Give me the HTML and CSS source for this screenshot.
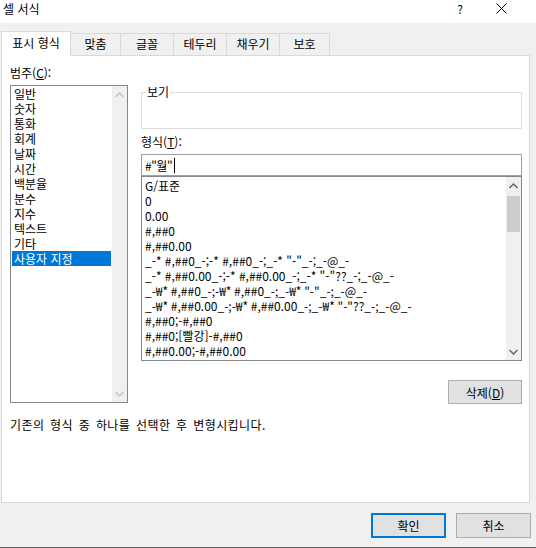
FILE: index.html
```html
<!DOCTYPE html>
<html lang="ko">
<head>
<meta charset="utf-8">
<title>셀 서식</title>
<link rel="stylesheet" href="styles.css">
</head>
<body>
<div class="window">
  <div class="titlebar">
    <span class="title">셀 서식</span>
    <span class="help">?</span>
    <span class="close"><svg width="11" height="11" viewBox="0 0 11 11"><path d="M0.5 0.5 L10.5 10.5 M10.5 0.5 L0.5 10.5" stroke="#000" stroke-width="1" fill="none"/></svg></span>
  </div>
  <div class="tabs">
    <div class="tab active w70">표시 형식</div>
    <div class="tab w50">맞춤</div>
    <div class="tab w53">글꼴</div>
    <div class="tab w53">테두리</div>
    <div class="tab w53">채우기</div>
    <div class="tab w50">보호</div>
  </div>
  <div class="panel">
    <div class="columns">
      <div class="left">
        <div class="label">범주(<u>C</u>):</div>
        <div class="listbox cat">
          <div class="items">
            <div class="item">일반</div>
            <div class="item">숫자</div>
            <div class="item">통화</div>
            <div class="item">회계</div>
            <div class="item">날짜</div>
            <div class="item">시간</div>
            <div class="item">백분율</div>
            <div class="item">분수</div>
            <div class="item">지수</div>
            <div class="item">텍스트</div>
            <div class="item">기타</div>
            <div class="item selected">사용자 지정</div>
          </div>
          <div class="scrollbar disabled">
            <div class="arrow"><svg width="9" height="6" viewBox="0 0 9 6"><path d="M0.5 5 L4.5 1 L8.5 5" stroke="#c2c2c2" stroke-width="1.3" fill="none"/></svg></div>
            <div class="track"></div>
            <div class="arrow"><svg width="9" height="6" viewBox="0 0 9 6"><path d="M0.5 1 L4.5 5 L8.5 1" stroke="#c2c2c2" stroke-width="1.3" fill="none"/></svg></div>
          </div>
        </div>
      </div>
      <div class="right">
        <div class="group">
          <span class="legend">보기</span>
        </div>
        <div class="label fmt-label">형식(<u>T</u>):</div>
        <div class="input"><span class="val">#"월"</span><span class="caret"></span></div>
        <div class="listbox fmt">
          <div class="items">
            <div class="item">G/표준</div>
            <div class="item">0</div>
            <div class="item">0.00</div>
            <div class="item">#,##0</div>
            <div class="item">#,##0.00</div>
            <div class="item">_-* #,##0_-;-* #,##0_-;_-* "-"_-;_-@_-</div>
            <div class="item">_-* #,##0.00_-;-* #,##0.00_-;_-* "-"??_-;_-@_-</div>
            <div class="item">_-₩* #,##0_-;-₩* #,##0_-;_-₩* "-"_-;_-@_-</div>
            <div class="item">_-₩* #,##0.00_-;-₩* #,##0.00_-;_-₩* "-"??_-;_-@_-</div>
            <div class="item">#,##0;-#,##0</div>
            <div class="item">#,##0;[빨강]-#,##0</div>
            <div class="item">#,##0.00;-#,##0.00</div>
          </div>
          <div class="scrollbar">
            <div class="arrow"><svg width="9" height="6" viewBox="0 0 9 6"><path d="M0.5 5 L4.5 1 L8.5 5" stroke="#606060" stroke-width="1.3" fill="none"/></svg></div>
            <div class="track"><div class="thumb"></div></div>
            <div class="arrow"><svg width="9" height="6" viewBox="0 0 9 6"><path d="M0.5 1 L4.5 5 L8.5 1" stroke="#606060" stroke-width="1.3" fill="none"/></svg></div>
          </div>
        </div>
        <div class="btnrow">
          <div class="button">삭제(<u>D</u>)</div>
        </div>
      </div>
    </div>
    <div class="desc">기존의 형식 중 하나를 선택한 후 변형시킵니다.</div>
  </div>
  <div class="footer">
    <div class="button default">확인</div>
    <div class="button">취소</div>
  </div>
  <div class="spacer"></div>
  <div class="bottomline"></div>
</div>
</body>
</html>
```
FILE: styles.css
```css
* { box-sizing: border-box; }
html, body {
  margin: 0;
  padding: 0;
}
body {
  width: 536px;
  height: 548px;
  overflow: hidden;
  background: #f0f0f0;
  font-family: "Noto Sans CJK KR", sans-serif;
  font-size: 12px;
  color: #000;
}
.window {
  display: flex;
  flex-direction: column;
  height: 548px;
}
.titlebar {
  height: 23px;
  background: #fff;
  display: flex;
  align-items: flex-start;
  line-height: 17px;
}
.title {
  padding-left: 3px;
  flex: 1;
}
.help {
  width: 12px;
  margin-right: 30px;
  text-align: center;
}
.close {
  width: 11px;
  height: 11px;
  margin-top: 3px;
  margin-right: 29px;
  display: flex;
}
.tabs {
  margin-top: 8px;
  height: 24px;
  display: flex;
  align-items: flex-end;
  padding-left: 1px;
  position: relative;
  z-index: 1;
}
.tab {
  height: 22px;
  border-top: 1px solid #d9d9d9;
  border-right: 1px solid #d9d9d9;
  background: #f0f0f0;
  text-align: center;
  line-height: 19px;
  padding-bottom: 2px;
}
.tab.active {
  height: 25px;
  margin-bottom: -1px;
  border-left: 1px solid #d9d9d9;
  background: #fff;
  padding-top: 1px;
  padding-bottom: 3px;
}
.w70 { width: 70px; }
.w50 { width: 50px; }
.w53 { width: 53px; }
.panel {
  margin-left: 1px;
  width: 529px;
  height: 448px;
  background: #fff;
  border: 1px solid #d9d9d9;
  padding: 10px 6px 0 8px;
}
.columns {
  display: grid;
  grid-template-columns: 118px 381px;
  column-gap: 13px;
  align-items: start;
}
.label {
  line-height: 14px;
  height: 14px;
}
.left .label {
  margin-bottom: 5px;
}
.listbox {
  border: 1px solid #828790;
  display: flex;
  background: #fff;
}
.listbox.cat {
  height: 318px;
}
.items {
  flex: 1;
  min-width: 0;
  overflow: hidden;
}
.item {
  height: 15px;
  line-height: 15px;
  white-space: nowrap;
  padding-left: 3px;
}
.cat .item {
  margin: 0 1px;
  padding-left: 2px;
}
.item.selected {
  background: #0078d7;
  color: #fff;
}
.scrollbar {
  width: 15px;
  background: #f0f0f0;
  display: flex;
  flex-direction: column;
}
.arrow {
  height: 17px;
  display: flex;
  align-items: center;
  justify-content: center;
}
.track {
  flex: 1;
  padding: 2px 1px 0;
}
.thumb {
  height: 36px;
  background: #cdcdcd;
}
.group {
  margin-top: 26px;
  height: 37px;
  border: 1px solid #dcdcdc;
  position: relative;
}
.legend {
  position: absolute;
  top: -8px;
  left: 4px;
  padding: 0 1px;
  background: #fff;
  line-height: 14px;
}
.fmt-label {
  margin-top: 6px;
}
.input {
  margin-top: 5px;
  height: 22px;
  border: 1px solid #a0a0a0;
  display: flex;
  align-items: center;
  padding-left: 3px;
}
.val {
  letter-spacing: -0.5px;
}
.caret {
  width: 1px;
  height: 15px;
  background: #000;
  margin-left: 2px;
}
.listbox.fmt {
  height: 185px;
}
.fmt .items {
  padding-top: 1px;
}
.btnrow {
  display: flex;
  justify-content: flex-end;
  margin-top: 19px;
}
.button {
  width: 74px;
  height: 24px;
  background: #e1e1e1;
  border: 1px solid #adadad;
  display: flex;
  align-items: center;
  justify-content: center;
}
.desc {
  margin-top: 14px;
  line-height: 14px;
  word-spacing: 2px;
  letter-spacing: 0.4px;
}
.footer {
  display: flex;
  justify-content: flex-end;
  gap: 10px;
  padding-top: 10px;
  padding-right: 5px;
}
.footer .button {
  width: 75px;
  height: 25px;
}
.footer .button.default {
  border: 2px solid #0078d7;
}
.spacer {
  flex: 1;
}
.bottomline {
  height: 1px;
  background: #5a5a5a;
}
```
